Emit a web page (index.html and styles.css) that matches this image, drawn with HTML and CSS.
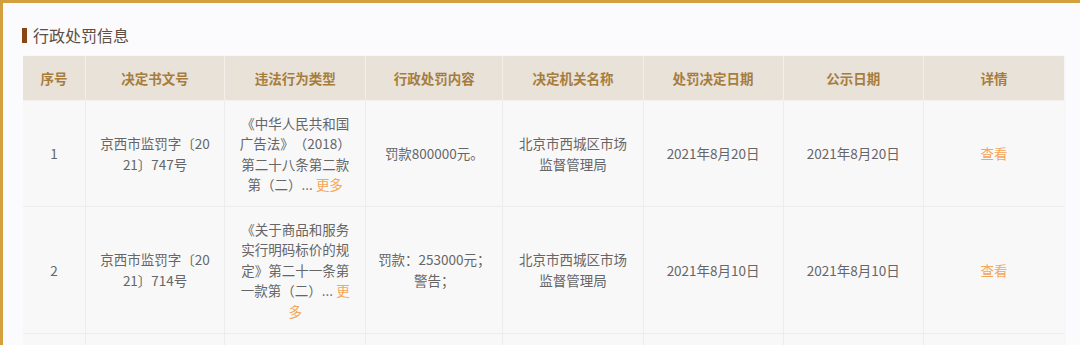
FILE: index.html
```html
<!DOCTYPE html>
<html lang="zh-CN">
<head>
<meta charset="utf-8">
<title>行政处罚信息</title>
<link rel="stylesheet" href="styles.css">
</head>
<body>
<div class="panel">
  <h2 class="title"><span class="bar"></span>行政处罚信息</h2>
  <table class="grid">
    <colgroup>
      <col class="w-no">
      <col class="w-doc">
      <col class="w-law">
      <col class="w-content">
      <col class="w-org">
      <col class="w-date">
      <col class="w-date">
      <col class="w-detail">
    </colgroup>
    <thead>
      <tr>
        <th>序号</th>
        <th>决定书文号</th>
        <th>违法行为类型</th>
        <th>行政处罚内容</th>
        <th>决定机关名称</th>
        <th>处罚决定日期</th>
        <th>公示日期</th>
        <th>详情</th>
      </tr>
    </thead>
    <tbody>
      <tr>
        <td>1</td>
        <td class="doc">京西市监罚字〔2021〕747号</td>
        <td class="law">《中华人民共和国广告法》（2018）第二十八条第二款第（二）... <a class="more" href="#">更多</a></td>
        <td>罚款800000元。</td>
        <td class="org">北京市西城区市场监督管理局</td>
        <td>2021年8月20日</td>
        <td>2021年8月20日</td>
        <td><a class="view" href="#">查看</a></td>
      </tr>
      <tr>
        <td>2</td>
        <td class="doc">京西市监罚字〔2021〕714号</td>
        <td class="law">《关于商品和服务实行明码标价的规定》第二十一条第一款第（二）... <a class="more" href="#">更多</a></td>
        <td>罚款：253000元；警告；</td>
        <td class="org">北京市西城区市场监督管理局</td>
        <td>2021年8月10日</td>
        <td>2021年8月10日</td>
        <td><a class="view" href="#">查看</a></td>
      </tr>
      <tr class="next">
        <td></td>
        <td class="doc"></td>
        <td class="law"></td>
        <td></td>
        <td class="org"></td>
        <td></td>
        <td></td>
        <td></td>
      </tr>
    </tbody>
  </table>
</div>
</body>
</html>
```

FILE: styles.css
```css
html, body {
  margin: 0;
  padding: 0;
  background: #fbfafc;
  font-family: "Noto Sans CJK SC", "Noto Sans", sans-serif;
  text-spacing-trim: space-all;
}

.panel {
  border-top: 3px solid #d4a03d;
  border-left: 3px solid #d4a03d;
  padding: 20px 0 0 20px;
  min-height: 400px;
}

.title {
  margin: 0 0 9px 0;
  display: flex;
  align-items: center;
  height: 24px;
  font-size: 16px;
  font-weight: normal;
  line-height: 24px;
  color: #5e4f45;
}

.bar {
  display: inline-block;
  width: 5px;
  height: 15px;
  margin-left: -1px;
  margin-right: 6px;
  background: #8a4612;
}

.grid {
  table-layout: fixed;
  width: 1041px;
  border-collapse: separate;
  border-spacing: 0;
  box-shadow: 1px 0 2px rgba(0, 0, 0, 0.04);
}

.w-no { width: 63px; }
.w-doc { width: 139px; }
.w-law { width: 141px; }
.w-content { width: 137px; }
.w-org { width: 140px; }
.w-date { width: 140px; }
.w-detail { width: 140px; }

.grid th {
  height: 44px;
  padding: 0;
  background: #e9e2d9;
  color: #a67d3d;
  font-size: 13.5px;
  font-weight: bold;
  text-align: center;
  vertical-align: middle;
  border-right: 1px solid #f3efea;
  border-bottom: 1px solid #f4f1ef;
}

.grid td {
  padding: 11.5px 10px;
  background: #f9f8f9;
  color: #666;
  font-size: 13.5px;
  line-height: 20.5px;
  text-align: center;
  vertical-align: middle;
  word-break: break-all;
  border-right: 1px solid #eeebeb;
  border-bottom: 1px solid #efecec;
}

.grid th:last-child,
.grid td:last-child {
  border-right: none;
}

.grid td.doc,
.grid td.law,
.grid td.org {
  padding-left: 12px;
  padding-right: 12px;
}

.grid tr.next td {
  height: 60px;
}

.more,
.view {
  color: #f4a65a;
  text-decoration: none;
}
```
